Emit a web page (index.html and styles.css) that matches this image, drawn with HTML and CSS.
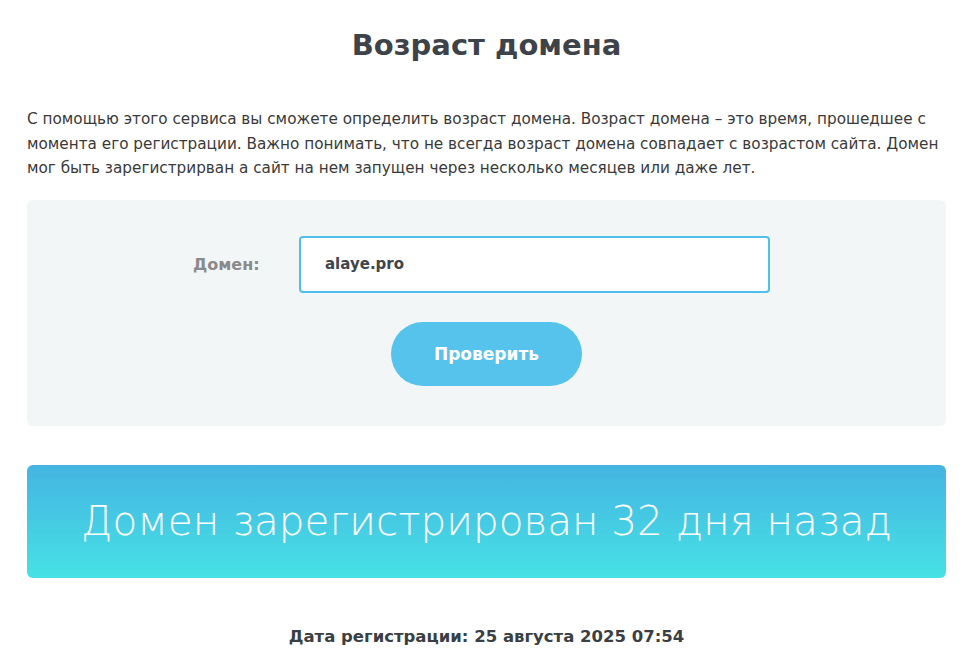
FILE: index.html
```html
<!DOCTYPE html>
<html lang="ru">
<head>
  <meta charset="UTF-8" />
  <meta name="viewport" content="width=device-width, initial-scale=1.0"/>
  <title>Возраст домена</title>
  <link rel="stylesheet" href="styles.css">
</head>
<body>
  <div class="container">
    <h1>Возраст домена</h1>

    <p class="intro">С помощью этого сервиса вы сможете определить возраст домена. Возраст домена – это время, прошедшее с момента его регистрации. Важно понимать, что не всегда возраст домена совпадает с возрастом сайта. Домен мог быть зарегистрирван а сайт на нем запущен через несколько месяцев или даже лет.</p>

    <form class="check-form" onsubmit="return false;">
      <div class="field">
        <label for="domain">Домен:</label>
        <input type="text" id="domain" value="alaye.pro" />
      </div>
      <button type="submit">Проверить</button>
    </form>

    <div class="result">Домен зарегистрирован 32 дня назад</div>

    <p class="reg-date">Дата регистрации: 25 августа 2025 07:54</p>
  </div>
</body>
</html>
```

FILE: styles.css
```css
body {
  margin: 0;
  padding: 0 28px 0 27px;
  background: #ffffff;
  color: #3a3f44;
  font-family: "DejaVu Sans", sans-serif;
}

.container {
  max-width: 919px;
  margin: 0 auto;
}

h1 {
  margin: 0;
  padding-top: 26px;
  text-align: center;
  font-size: 29px;
  line-height: 38px;
  font-weight: 700;
  color: #3d4348;
}

.intro {
  margin: 43px 0 0;
  font-size: 15.25px;
  line-height: 24.5px;
  color: #3a3a3a;
}

.check-form {
  margin-top: 19px;
  background: #f3f6f7;
  border-radius: 6px;
  padding: 36px 0 40px;
  display: flex;
  flex-direction: column;
  align-items: center;
}

.field {
  display: flex;
  align-items: center;
  margin-right: 10px;
}

.field label {
  width: 106px;
  font-size: 16px;
  font-weight: 700;
  color: #8a8a8a;
}

.field input {
  box-sizing: border-box;
  width: 471px;
  height: 57px;
  padding: 0 24px;
  border: 2px solid #4fc0eb;
  border-radius: 4px;
  background: #fff;
  font-family: "DejaVu Sans", sans-serif;
  font-size: 15px;
  font-weight: 700;
  color: #40454a;
  outline: none;
}

button {
  margin-top: 29px;
  width: 191px;
  height: 64px;
  border: none;
  border-radius: 32px;
  background: #55c3ec;
  color: #fff;
  font-family: "DejaVu Sans", sans-serif;
  font-size: 17px;
  font-weight: 700;
  cursor: pointer;
}

.result {
  margin-top: 39px;
  height: 113px;
  display: flex;
  align-items: center;
  justify-content: center;
  border-radius: 6px;
  background: linear-gradient(to bottom, #45b4e2, #46e2e5);
  color: #fff;
  font-size: 40.5px;
  font-weight: 200;
}

.reg-date {
  margin: 49px 0 0;
  text-align: center;
  font-size: 16.5px;
  font-weight: 700;
  color: #3a3f44;
}
```
